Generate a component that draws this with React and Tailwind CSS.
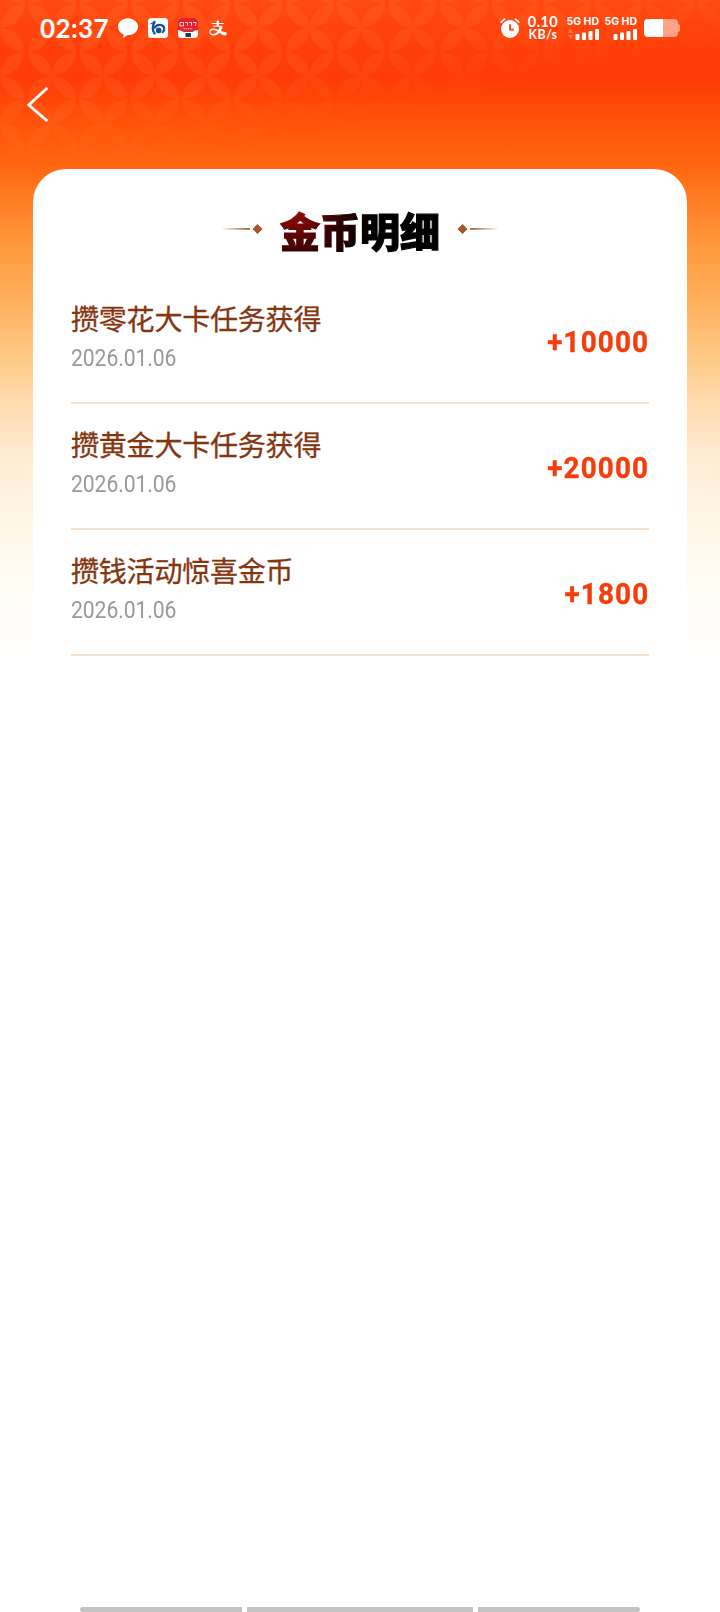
import React from 'react';
import { AiOutlineAlipay } from 'react-icons/ai';

const records = [
  { id: 1, title: '攒零花大卡任务获得', date: '2026.01.06', amount: '+10000' },
  { id: 2, title: '攒黄金大卡任务获得', date: '2026.01.06', amount: '+20000' },
  { id: 3, title: '攒钱活动惊喜金币', date: '2026.01.06', amount: '+1800' },
];

const HeaderPattern = () => (
  <svg className="absolute top-0 left-0 w-full h-[160px]" viewBox="0 0 720 160">
    <defs>
      <pattern id="petals" x="232.25" y="-19.5" width="51.5" height="47.5" patternUnits="userSpaceOnUse">
        <g fill="#ff7a3c">
          <path d="M25.75 0A23.75 23.75 0 0 1 49.5 23.75A23.75 23.75 0 0 1 25.75 0Z" />
          <path d="M49.5 23.75A23.75 23.75 0 0 1 25.75 47.5A23.75 23.75 0 0 1 49.5 23.75Z" />
          <path d="M25.75 47.5A23.75 23.75 0 0 1 2 23.75A23.75 23.75 0 0 1 25.75 47.5Z" />
          <path d="M2 23.75A23.75 23.75 0 0 1 25.75 0A23.75 23.75 0 0 1 2 23.75Z" />
        </g>
      </pattern>
      <linearGradient id="fade" x1="300" y1="0" x2="326" y2="128" gradientUnits="userSpaceOnUse">
        <stop offset="0" stopColor="#fff" stopOpacity="0.22" />
        <stop offset="0.5" stopColor="#fff" stopOpacity="0.18" />
        <stop offset="1" stopColor="#fff" stopOpacity="0" />
      </linearGradient>
      <mask id="petalMask">
        <rect width="720" height="160" fill="url(#fade)" />
      </mask>
    </defs>
    <rect width="720" height="160" fill="url(#petals)" mask="url(#petalMask)" />
  </svg>
);

const Signal = ({ arrows }) => (
  <div className="w-8 flex flex-col items-end">
    <span className="font-['Inter'] text-[10.5px] leading-[10px] font-bold whitespace-nowrap">5G HD</span>
    <svg className="w-8 h-3 mt-px" viewBox="0 0 32 12" fill="currentColor">
      {arrows && (
        <g opacity="0.25">
          <path d="M1 5L3.500 1L6 5Z" />
          <path d="M1 7L3.500 11L6 7Z" />
        </g>
      )}
      <rect x="8.500" y="6" width="4" height="6" rx="1" />
      <rect x="15" y="4.500" width="4" height="7.500" rx="1" />
      <rect x="21.500" y="3" width="4" height="9" rx="1" />
      <rect x="28" y="1" width="4" height="11" rx="1" />
    </svg>
  </div>
);

const StatusBar = () => (
  <div className="relative h-14 pl-10 pr-10 flex items-center justify-between text-white">
    <div className="flex items-center">
      <span className="w-[78px] pb-px font-['Lato'] text-[26px] leading-none font-bold tracking-[0.4px]">02:37</span>
      <svg className="w-5 h-5" viewBox="0 0 20 20" fill="currentColor">
        <path d="M10 0.300C4.400 0.300 0 4 0 8.700C0 12.300 2.200 15.200 5.500 16.600L5.100 19.300C5.100 19.800 5.500 20 5.900 19.700L9.200 17.200C15.200 17.200 20 13.700 20 8.700C20 4 15.600 0.300 10 0.300Z" />
      </svg>
      <svg className="w-5 h-5 ml-2.5" viewBox="0 0 20 20">
        <rect width="20" height="20" rx="3.500" fill="#fff" />
        <g fill="none" stroke="#17508f" strokeLinecap="round">
          <path d="M6.500 3.900C4.800 7 3.700 12.300 6.600 15.400" strokeWidth="2.400" />
          <path d="M3 5.800L6 4.200" strokeWidth="1.200" />
          <path d="M6.800 9.600C9.500 5.600 15.500 6.300 16.200 10.200C16.400 12 15.700 13.300 14.800 14" strokeWidth="2.200" />
        </g>
        <circle cx="10.700" cy="12.400" r="2.800" fill="#17508f" />
      </svg>
      <svg className="w-5 h-5 ml-2.5" viewBox="0 0 20 20">
        <rect width="20" height="20" rx="3.500" fill="#fff" />
        <path d="M3.500 0H16.500A3.500 3.500 0 0 1 20 3.500V12Q16.500 12.200 14.500 14H5.500Q3.500 12.200 0 12V3.500A3.500 3.500 0 0 1 3.500 0Z" fill="#e3222b" />
        <path d="M2 4.500H5.500V8H2ZM7 4.500H9.500V7.500M11 4.500H13.500V8M15 4.500H18L17.500 8" fill="none" stroke="#fff" strokeWidth="0.900" opacity="0.850" />
        <path d="M5.500 10.700H14.500" stroke="#fff" strokeWidth="1" strokeDasharray="1.500 0.700" opacity="0.800" />
        <rect x="7.500" y="15" width="5.500" height="4" rx="0.500" fill="#1f3d4d" />
      </svg>
      <AiOutlineAlipay className="w-5 h-5 ml-2.5" />
    </div>

    <div className="flex items-center">
      <svg className="w-5 h-5 -ml-px mr-px" viewBox="0 0 20 20" fill="currentColor">
        <circle cx="10" cy="11" r="9" />
        <path d="M1.200 4.200L4.500 1.200M18.800 4.200L15.500 1.200" stroke="currentColor" strokeWidth="1.800" strokeLinecap="round" />
        <path d="M10 6.200V11.700H14" fill="none" stroke="#ff430c" strokeWidth="1.800" />
      </svg>
      <div className="w-[30px] ml-[7px] mr-px flex flex-col items-center font-['Lato'] font-bold">
        <span className="text-[14.5px] leading-[13px] tracking-[0.4px]">0.10</span>
        <span className="text-[12.5px] leading-[13px] tracking-[0.3px]">KB/s</span>
      </div>
      <div className="ml-2 flex gap-1.5">
        <Signal arrows />
        <Signal />
      </div>
      <svg className="w-9 h-[18px] ml-[7px]" viewBox="0 0 36 18">
        <path d="M19 0H30A4 4 0 0 1 34 4V5.500H35A1 1 0 0 1 36 6.500V11.500A1 1 0 0 1 35 12.500H34V14A4 4 0 0 1 30 18H19Z" fill="#fff" opacity="0.500" />
        <path d="M4 0H19V18H4A4 4 0 0 1 0 14V4A4 4 0 0 1 4 0Z" fill="#fff" />
      </svg>
    </div>
  </div>
);

const TitleOrnament = ({ flip }) => (
  <svg className={`w-[42px] h-3 ${flip ? '-scale-x-100' : ''}`} viewBox="0 0 42 12">
    <defs>
      <linearGradient id="ornamentLine" x1="0" x2="1">
        <stop offset="0" stopColor="#a8622f" stopOpacity="0" />
        <stop offset="1" stopColor="#a05a30" />
      </linearGradient>
    </defs>
    <rect x="0" y="5" width="29" height="1.800" fill="url(#ornamentLine)" />
    <path d="M36.500 1L41.500 6L36.500 11L31.500 6Z" fill="#a5552c" />
  </svg>
);

const App = () => {
  return (
    <div className="relative w-[720px] h-[1612px] overflow-hidden flex flex-col bg-white bg-[linear-gradient(180deg,#ff4a10_0px,#ff3e08_50px,#ff3c06_80px,#ff540a_125px,#ff6812_168px,#ff8026_205px,#ff983c_245px,#feb05c_300px,#ffc680_350px,#ffdaac_400px,#ffe9cf_450px,#fff3e0_500px,#fffaee_550px,#fffdf8_610px,#ffffff_665px)] font-['Noto_Sans_CJK_SC',sans-serif]">
      <HeaderPattern />
      <StatusBar />

      {/* Nav bar */}
      <div className="relative h-[113px] pl-[26px] pt-[30px]">
        <button aria-label="返回" className="block">
          <svg className="w-6 h-9" viewBox="0 0 24 36" fill="none" stroke="#fff" strokeWidth="2.800">
            <path d="M21.300 2L2.800 19L21.300 35" />
          </svg>
        </button>
      </div>

      {/* Coin records */}
      <div className="relative flex-1 mx-[33px] px-[38px] bg-white rounded-t-[33px]">
        <div className="h-[109px] pt-[29px] flex items-start justify-center">
          <div className="mt-[25px]"><TitleOrnament /></div>
          <h1 className="mx-[17px] text-[40px] leading-[64px] font-black text-transparent bg-clip-text bg-[radial-gradient(circle_at_16px_16px,#8e0a0a_0px,#6a0505_18px,#300202_42px,#000000_75px)] [-webkit-text-stroke:1.2px_transparent]">
            金币明细
          </h1>
          <div className="mt-[25px]"><TitleOrnament flip /></div>
        </div>

        <ul>
          {records.map((item) => (
            <li key={item.id} className="h-[126px] flex justify-between border-b-2 border-[#fae0cc]">
              <div className="pt-5">
                <p className="text-[28px] leading-10 tracking-[-0.2px] text-[#84350f] [-webkit-text-stroke:0.3px_#84350f]">{item.title}</p>
                <p className="mt-[5px] origin-left scale-x-92 font-['Roboto'] text-[23px] leading-8 tracking-[-0.1px] text-[#999999]">{item.date}</p>
              </div>
              <span className="pt-11 origin-right scale-x-96 font-['Roboto'] text-[29px] leading-10 font-bold tracking-[1.2px] text-[#f53d0c] [-webkit-text-stroke:0.4px_#f53d0c]">{item.amount}</span>
            </li>
          ))}
        </ul>
      </div>

      {/* System gesture bar */}
      <div className="relative h-[5px] px-20 flex gap-[5px] bg-white">
        <div className="w-[162px] rounded-l-full bg-[#c2c2c2]"></div>
        <div className="flex-1 bg-[#c2c2c2]"></div>
        <div className="w-[162px] rounded-r-full bg-[#c2c2c2]"></div>
      </div>
    </div>
  );
};

export default App;
